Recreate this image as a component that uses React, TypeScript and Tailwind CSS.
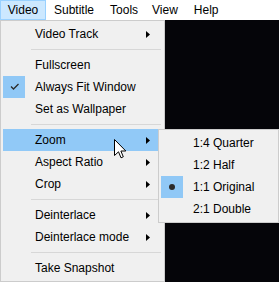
import React from "react";

const Arrow = () => (
  <svg width="4" height="7" viewBox="0 0 4 7" className="block">
    <polygon points="0,0 4,3.5 0,7" fill="#000" />
  </svg>
);

type Item = { label: string; sub?: boolean; checked?: boolean; hl?: boolean } | "sep";

const items: Item[] = [
  { label: "Video Track", sub: true },
  "sep",
  { label: "Fullscreen" },
  { label: "Always Fit Window", checked: true },
  { label: "Set as Wallpaper" },
  "sep",
  { label: "Zoom", sub: true, hl: true },
  { label: "Aspect Ratio", sub: true },
  { label: "Crop", sub: true },
  "sep",
  { label: "Deinterlace", sub: true },
  { label: "Deinterlace mode", sub: true },
  "sep",
  { label: "Take Snapshot" },
];

const zoomItems = [
  { label: "1:4 Quarter" },
  { label: "1:2 Half" },
  { label: "1:1 Original", bullet: true },
  { label: "2:1 Double" },
];

export default function App() {
  return (
    <div className="relative w-[279px] h-[282px] overflow-hidden bg-white font-['Liberation_Sans',Arial,sans-serif] text-[12px] text-black leading-none">
      {/* menu bar */}
      <div className="h-[20px] flex bg-white">
        <div className="h-[20px] w-[46px] flex items-center justify-center bg-[#cce8ff] border border-[#99d1ff]">
          Video
        </div>
        <div className="h-[20px] px-[8px] flex items-center">Subtitle</div>
        <div className="h-[20px] pl-[8px] pr-[6px] flex items-center">Tools</div>
        <div className="h-[20px] px-[8px] flex items-center">View</div>
        <div className="h-[20px] px-[8px] flex items-center">Help</div>
      </div>
      <div className="flex h-[262px]">
        <div className="w-[165px] h-[262px] bg-[#f0f0f0] border border-[#cccccc] p-[2px]">
          {items.map((it, i) =>
            it === "sep" ? (
              <div key={i} className="h-[9px] flex items-center">
                <div className="ml-[28px] mr-[1px] flex-1 h-px bg-[#d7d7d7]" />
              </div>
            ) : (
              <div
                key={i}
                className={
                  "h-[22px] flex items-center " + (it.hl ? "bg-[#91c9f7]" : "")
                }
              >
                <div
                  className={
                    "w-[22px] h-[22px] flex items-center justify-center " +
                    (it.checked ? "bg-[#90c8f6]" : "")
                  }
                >
                  {it.checked && (
                    <svg width="22" height="22" viewBox="0 0 22 22">
                      <polyline
                        points="8,10.5 10.5,13 15.5,8"
                        fill="none"
                        stroke="#2b2b2b"
                        strokeWidth="1.3"
                      />
                    </svg>
                  )}
                </div>
                <div className="ml-[10px] flex-1">{it.label}</div>
                {it.sub && (
                  <div className="mr-[12px]">
                    <Arrow />
                  </div>
                )}
              </div>
            )
          )}
        </div>
        <div className="flex-1 bg-[#050509]" />
      </div>

      {/* submenu */}
      <div className="absolute left-[158px] top-[129px] w-[121px] h-[94px] bg-[#f0f0f0] border border-[#cccccc] p-[2px]">
        {zoomItems.map((z, i) => (
          <div key={i} className="h-[22px] flex items-center">
            <div
              className={
                "w-[22px] h-[22px] flex items-center justify-center " +
                (z.bullet ? "bg-[#90c8f6]" : "")
              }
            >
              {z.bullet && <div className="w-[6px] h-[6px] rounded-full bg-[#2b2b2b]" />}
            </div>
            <div className="ml-[10px]">{z.label}</div>
          </div>
        ))}
      </div>

      {/* cursor */}
      <svg
        className="absolute left-[114px] top-[139px]"
        width="13"
        height="20"
        viewBox="0 0 13 20"
      >
        <path
          d="M0.5,0.5 L0.5,16.5 L4.5,12.8 L7,18.8 L9.3,17.8 L6.9,12 L11.8,12 Z"
          fill="#fff"
          stroke="#000"
          strokeWidth="1"
          strokeLinejoin="miter"
        />
      </svg>
    </div>
  );
}
